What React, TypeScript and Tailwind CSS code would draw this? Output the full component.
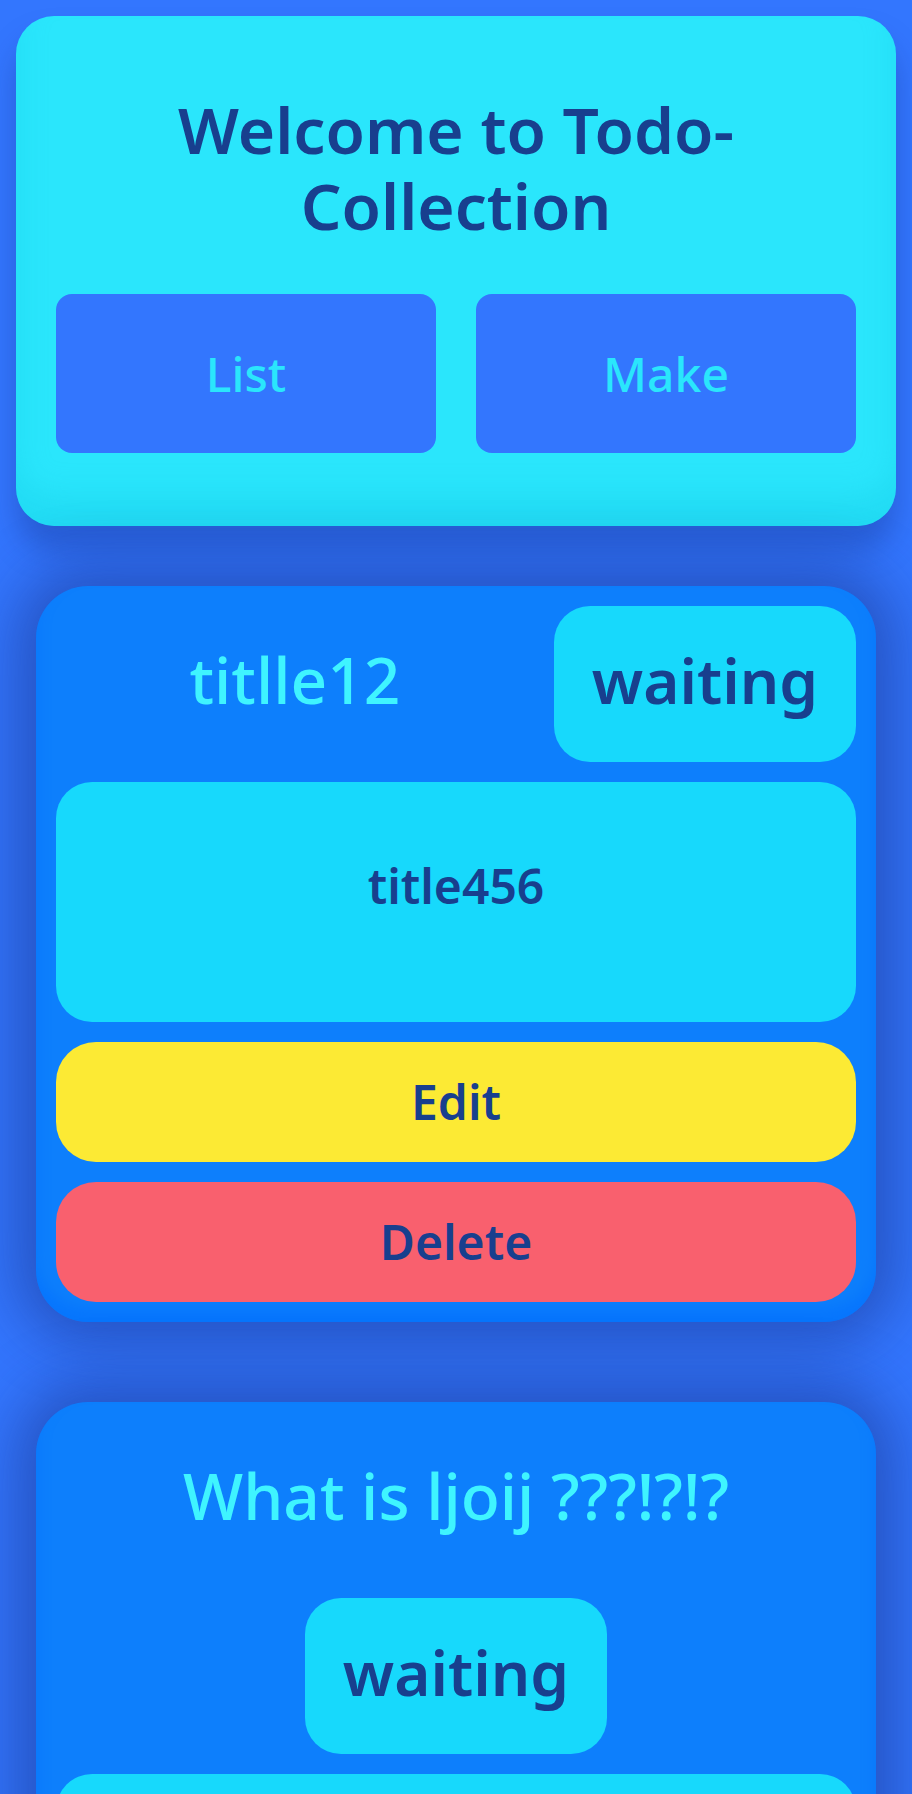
import React from "react";

function TodoCard({ title, status, body }: { title: string; status: string; body: string }) {
  return (
    <div className="rounded-[52px] bg-[#0d7ffc] p-[20px] shadow-[0_0_60px_20px_rgba(20,40,120,0.45),inset_0_-14px_14px_rgba(0,110,255,0.5)] flex flex-col gap-[20px]">
      <div className="flex flex-wrap justify-center gap-[20px]">
        <div className="grow h-[156px] flex items-center justify-center px-[40px] pb-[8px] text-[64px] leading-[76px] font-medium text-[#3ff4ff] whitespace-nowrap">
          {title}
        </div>
        <div className="w-[302px] h-[156px] flex items-center justify-center pb-[8px] rounded-[36px] bg-[#17d9fc] text-[62px] leading-[76px] font-semibold text-[#183f8e]">
          {status}
        </div>
      </div>
      <div className="h-[240px] rounded-[36px] bg-[#17d9fc] flex justify-center pt-[76px] text-[48px] leading-[56px] font-semibold text-[#183f8e]">
        {body}
      </div>
      <div className="h-[120px] rounded-[40px] bg-[#fcea34] flex items-center justify-center text-[48px] font-semibold text-[#183f8e]">
        Edit
      </div>
      <div className="h-[120px] rounded-[40px] bg-[#f9606e] flex items-center justify-center text-[48px] font-semibold text-[#183f8e]">
        Delete
      </div>
    </div>
  );
}

export default function App() {
  return (
    <div className="min-h-screen bg-[#3376fe] p-[16px] font-['Noto_Sans',sans-serif]">
      <div className="rounded-[38px] bg-[#2ae6fc] px-[40px] pt-[76px] pb-[73px] shadow-[0_24px_30px_rgba(20,50,140,0.35),inset_0_-30px_30px_rgba(20,200,230,0.35)]">
        <h1 className="text-center text-[64px] leading-[76px] font-semibold text-[#183f8e]">
          Welcome to Todo-Collection
        </h1>
        <div className="mt-[50px] grid grid-cols-2 gap-[40px]">
          <button className="h-[159px] rounded-[16px] bg-[#3376fe] text-[48px] font-medium text-[#2ae6fc]">List</button>
          <button className="h-[159px] rounded-[16px] bg-[#3376fe] text-[48px] font-medium text-[#2ae6fc]">Make</button>
        </div>
      </div>
      <div className="mt-[60px] px-[20px] flex flex-col gap-[80px] pb-[80px]">
        <TodoCard title="titlle12" status="waiting" body="title456" />
        <TodoCard title="What is ljoij ???!?!?" status="waiting" body="ljoij" />
      </div>
    </div>
  );
}
